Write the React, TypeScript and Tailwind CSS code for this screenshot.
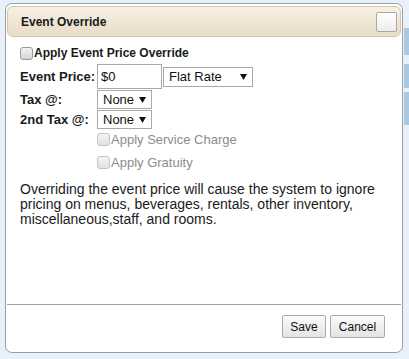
import React from "react";

function Arrow() {
  return (
    <svg width="7" height="6" viewBox="0 0 7 6" className="shrink-0">
      <polygon points="0,0 7,0 3.5,6" fill="#111" />
    </svg>
  );
}

function Check({ disabled }: { disabled?: boolean }) {
  return (
    <span
      className={`inline-block w-[13px] h-[13px] rounded-[3px] border shrink-0 ${
        disabled
          ? "border-[#c4c4c4] bg-gradient-to-b from-[#f4f4f4] to-[#e2e2e2]"
          : "border-[#9a9a9a] bg-gradient-to-b from-[#f2f2f2] to-[#d6d6d6]"
      }`}
    />
  );
}

function Select({ label, width }: { label: string; width: string }) {
  return (
    <div
      className={`${width} h-full flex items-center justify-between pl-[5px] pr-[5px] border border-[#a9a9a9] bg-white text-[13px] text-[#111]`}
    >
      <span>{label}</span>
      <Arrow />
    </div>
  );
}

export default function App() {
  return (
    <div className="relative w-[409px] h-[359px] overflow-hidden bg-[#e6f1fb] font-['Liberation_Sans',Arial,sans-serif]">
      {/* page behind the dialog */}
      <div className="flex justify-end">
        <div className="flex flex-col w-[5px] pt-[28px]">
          <div className="h-[27px] bg-[#a7c9e6]" />
          <div className="h-[24px] mt-[9px] bg-[#a7c9e6]" />
          <div className="h-[33px] mt-[4px] bg-[#a7c9e6]" />
        </div>
      </div>

      {/* dialog */}
      <div className="absolute left-[5px] top-[3px] w-[398px] h-[350px] flex flex-col bg-white border border-[#9e9e9e] rounded-[7px] px-[1px] pt-[2px] pb-[1px]">
        <div className="h-[31px] shrink-0 flex items-center justify-between pl-[13px] pr-[3px] border border-[#d5c6a6] rounded-[6px] bg-gradient-to-b from-[#f6f0e5] to-[#e8dcc5]">
          <span className="text-[12px] font-bold text-[#1a1a1a]">Event Override</span>
          <div className="w-[21px] h-[20px] border border-[#a8a8a8] rounded-[2px] bg-gradient-to-b from-white to-[#ececec]" />
        </div>

        <div className="flex-1 flex flex-col px-[13px] pt-[8px] text-[#1a1a1a]">
          <label className="h-[16px] flex items-center">
            <Check />
            <span className="ml-[1px] text-[12px] font-bold">Apply Event Price Override</span>
          </label>

          <div className="mt-[3px] h-[25px] flex items-center">
            <span className="w-[77px] text-[13px] font-bold">Event Price:</span>
            <div className="w-[65px] h-[25px] flex items-center pl-[3px] border border-[#a9a9a9] text-[13px] text-[#111]">
              $0
            </div>
            <div className="ml-[1px] h-[20px]">
              <Select label="Flat Rate" width="w-[90px]" />
            </div>
          </div>

          <div className="mt-[1px] h-[19px] flex items-center">
            <span className="w-[77px] text-[13px] font-bold">Tax @:</span>
            <Select label="None" width="w-[55px]" />
          </div>
          <div className="mt-[1px] h-[19px] flex items-center">
            <span className="w-[77px] text-[13px] font-bold">2nd Tax @:</span>
            <Select label="None" width="w-[55px]" />
          </div>

          <label className="h-[21px] pl-[77px] flex items-center">
            <Check disabled />
            <span className="ml-[1px] text-[13px] text-[#8c8c8c]">Apply Service Charge</span>
          </label>
          <label className="mt-[2px] h-[21px] pl-[77px] flex items-center">
            <Check disabled />
            <span className="ml-[1px] text-[13px] text-[#8c8c8c]">Apply Gratuity</span>
          </label>

          <p className="mt-[9px] pr-[12px] text-[14px] leading-[15px] text-[#1a1a1a]">
            Overriding the event price will cause the system to ignore pricing on menus, beverages,
            rentals, other inventory, miscellaneous,staff, and rooms.
          </p>
        </div>

        <div className="h-px shrink-0 bg-[#a3a3a3]" />

        <div className="h-[46px] shrink-0 flex justify-end items-start gap-[4px] pt-[10px] pr-[16px]">
          <button className="w-[44px] h-[23px] border border-[#aaaaaa] rounded-[2px] bg-gradient-to-b from-[#fbfbfb] to-[#e4e4e4] text-[12px] text-[#111]">
            Save
          </button>
          <button className="w-[55px] h-[23px] border border-[#aaaaaa] rounded-[2px] bg-gradient-to-b from-[#fbfbfb] to-[#e4e4e4] text-[12px] text-[#111]">
            Cancel
          </button>
        </div>
      </div>
    </div>
  );
}
